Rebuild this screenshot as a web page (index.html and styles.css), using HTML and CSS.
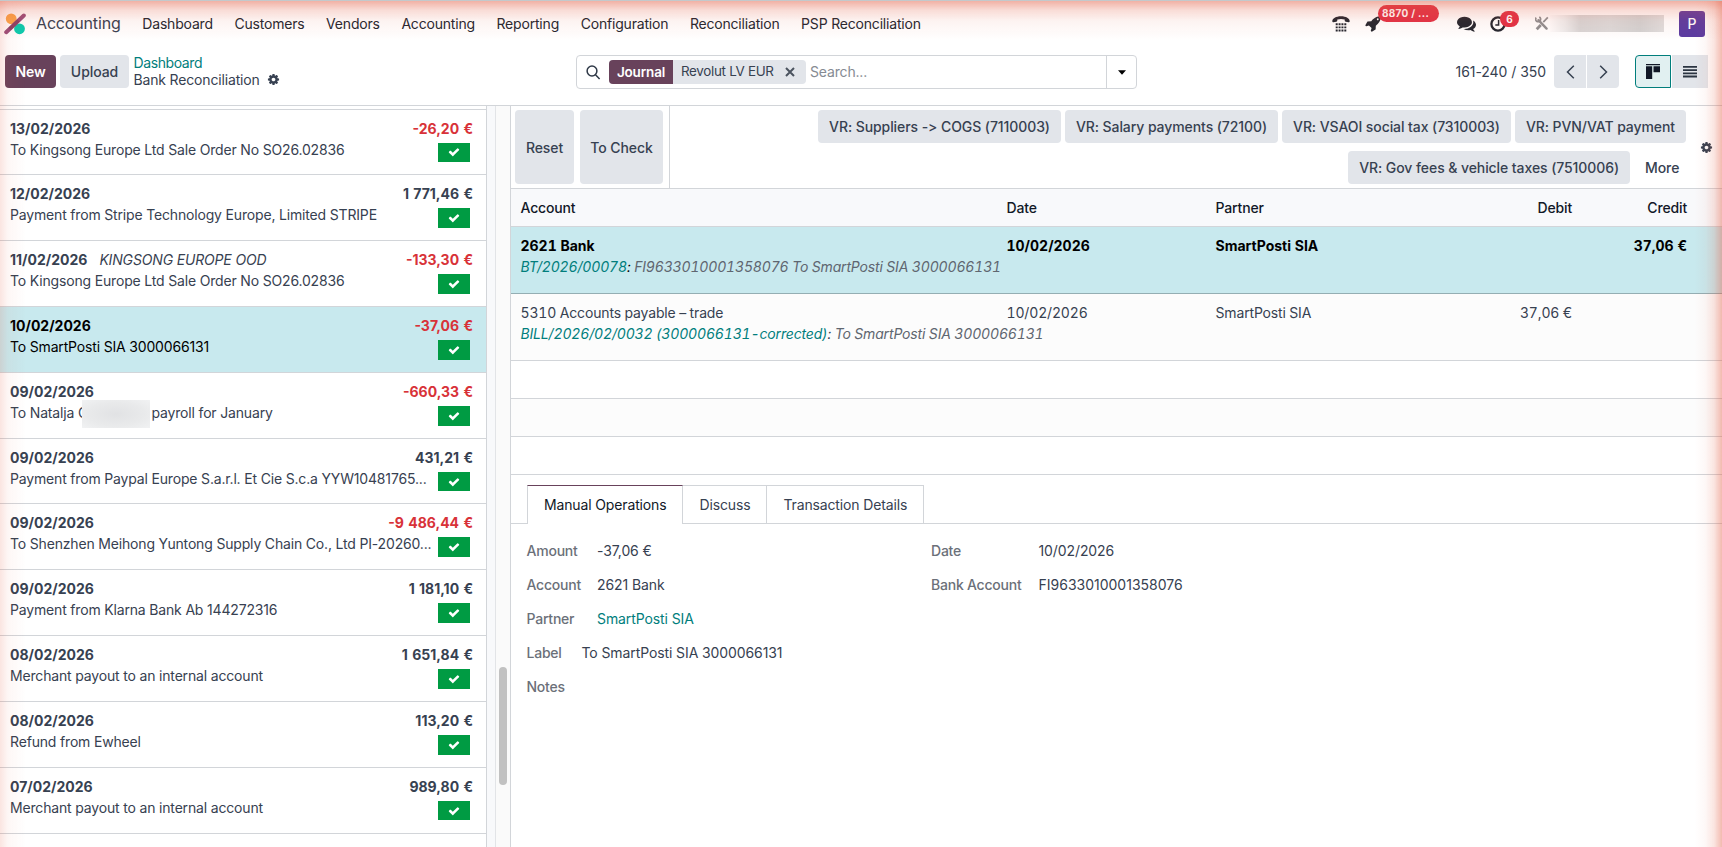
FILE: index.html
```html
<!DOCTYPE html>
<html lang="en">
  <head>
    <meta charset="UTF-8" />
    <meta name="viewport" content="width=device-width, initial-scale=1.0" />
    <title>Bank Reconciliation</title>
    <link rel="stylesheet" href="styles.css">
  </head>
  <body>
    <svg class="sprite" width="0" height="0">
      <symbol id="cog" viewBox="0 0 1792 1792"><path d="M1152 896q0-106-75-181t-181-75-181 75-75 181 75 181 181 75 181-75 75-181zm512-109v222q0 12-8 23t-20 13l-185 28q-19 54-39 91 35 50 107 138 10 12 10 25t-9 23q-27 37-99 108t-94 71q-12 0-26-9l-138-108q-44 23-91 38-16 136-29 186-7 28-36 28h-222q-14 0-24.5-8.5t-11.5-21.5l-28-184q-49-16-90-37l-141 107q-10 9-25 9-14 0-25-11-126-114-165-168-7-10-7-23 0-12 8-23 15-21 51-66.5t54-70.5q-27-50-41-99l-183-27q-13-2-21-12.5t-8-23.5v-222q0-12 8-23t19-13l186-28q14-46 39-92-40-57-107-138-10-12-10-24 0-10 9-23 26-36 98.5-107.5t94.5-71.5q13 0 26 10l138 107q44-23 91-38 16-136 29-186 7-28 36-28h222q14 0 24.5 8.5t11.5 21.5l28 184q49 16 90 37l142-107q9-9 24-9 13 0 25 10 129 119 165 170 7 8 7 22 0 12-8 23-15 21-51 66.5t-54 70.5q26 50 41 98l183 28q13 2 21 12.5t8 23.5z"/></symbol>
      <symbol id="check" viewBox="0 0 1792 1792"><path d="M1671 566q0 40-28 68l-724 724-136 136q-28 28-68 28t-68-28l-136-136-362-362q-28-28-28-68t28-68l136-136q28-28 68-28t68 28l294 295 656-657q28-28 68-28t68 28l136 136q28 28 28 68z"/></symbol>
    </svg>

    <header class="navbar">
      <svg class="logo" width="22" height="22" viewBox="0 0 22 22">
        <circle cx="7.2" cy="5.8" r="5.4" fill="#fba54a"/>
        <circle cx="15.5" cy="15.8" r="5.4" fill="#06cdb0"/>
        <path d="M2.2 19.2L19.8 2.5" stroke="#984c7b" stroke-width="4" stroke-linecap="round"/>
        <path d="M5.6 16L14.4 7.6" stroke="#7a3550" stroke-width="3.4" opacity=".5"/>
      </svg>
      <span class="app-name">Accounting</span>
      <nav class="menu">
        <a>Dashboard</a>
        <a>Customers</a>
        <a>Vendors</a>
        <a>Accounting</a>
        <a>Reporting</a>
        <a>Configuration</a>
        <a>Reconciliation</a>
        <a>PSP Reconciliation</a>
      </nav>
      <div class="systray">
        <svg class="phone" width="18" height="18" viewBox="0 0 18 18">
          <path d="M.3 6.2C.2 3.600 4 1.300 9 1.300s8.800 2.300 8.700 4.900c0 .8-.4 1.100-1.100 1l-2.900-.5c-.7-.1-1-.5-1-1.100V4.600c-2.300-.7-5.100-.7-7.400 0v1c0 .6-.3 1-1 1.100l-2.900.5c-.7.1-1.100-.2-1.100-1z"/>
          <path d="M3.700 9.300h10.600M3.700 12.400h10.600M3.700 15.500h10.600" stroke="#22262f" stroke-width="1.900" stroke-dasharray="2 .87"/>
        </svg>
        <div class="rocket">
          <svg width="17" height="17" viewBox="0 0 1792 1792"><path d="M1440 448q0-40-28-68t-68-28-68 28-28 68 28 68 68 28 68-28 28-68zm224-288q0 249-75.500 430.500t-253.500 360.500q-81 80-195 176l-20 379q-2 16-16 26l-384 224q-7 4-16 4-12 0-23-9l-64-64q-13-14-8-32l85-276-281-281-276 85q-3 1-9 1-14 0-23-9l-64-64q-17-19-5-39l224-384q10-14 26-16l379-20q96-114 176-195 188-187 358-258t431-71q14 0 24 9.500t10 22.500z"/></svg>
          <span class="badge badge-wide">8870 / ...</span>
        </div>
        <svg class="comments" width="19" height="19" viewBox="0 0 1792 1792"><path d="M1408 768q0 139-94 257t-256.500 186.500-353.500 68.500q-86 0-176-16-124 88-278 128-36 9-86 16h-3q-11 0-20.500-8t-11.500-21q-1-3-1-6.500t.5-6.500 2-6l2.500-5 3.500-5.500 4-5 4.500-5 4-4.500q5-6 23-25t26-29.500 22.500-29 25-38.500 20.500-44q-124-72-195-177t-71-224q0-139 94-257t256.500-186.500 353.500-68.500 353.500 68.500 256.500 186.500 94 257zm384 256q0 120-71 224.500t-195 176.500q10 24 20.500 44t25 38.500 22.500 29 26 29.500 23 25q1 1 4 4.500t4.500 5 4 5 3.500 5.500l2.500 5 2 6 .5 6.500-1 6.500q-3 14-13 22t-22 7q-50-7-86-16-154-40-278-128-90 16-176 16-271 0-472-132 58 4 88 4 161 0 309-45t264-129q125-92 192-212t67-254q0-77-23-152 129 71 204 178t75 230z"/></svg>
        <div class="clock">
          <svg width="16" height="16" viewBox="0 0 16 16" fill="none" stroke="#22262f" stroke-width="2.300"><circle cx="8" cy="8" r="6.600"/><path d="M8.600 4v5H5.300" stroke-width="1.500"/></svg>
          <span class="badge">6</span>
        </div>
        <svg class="tools" width="14" height="15" viewBox="0 0 14 15" stroke="#8f8f91" fill="none">
          <path d="M3.500 4.200L11.600 12.600" stroke-width="2.400" stroke-linecap="round"/>
          <path d="M1.200 1.600A2.500 2.500 0 1 0 4.300 1" stroke-width="1.700"/>
          <path d="M12.800 1.400L8.300 6.200" stroke-width="1.700"/>
          <path d="M5.800 9L1.700 13.300" stroke-width="2.800"/>
        </svg>
        <span class="masked-name"></span>
        <span class="avatar">P</span>
      </div>
    </header>

    <div class="control-panel">
      <div class="cp-left">
        <button class="btn btn-primary">New</button>
        <button class="btn">Upload</button>
        <div class="breadcrumb">
          <a class="link">Dashboard</a>
          <span>Bank Reconciliation <svg width="13" height="13"><use href="#cog"/></svg></span>
        </div>
      </div>
      <div class="search">
        <svg class="search-icon" width="15" height="15" viewBox="0 0 15 15" fill="none" stroke="#2f3947" stroke-width="1.500"><circle cx="6" cy="6" r="4.900"/><path d="M9.500 9.700L13.600 14"/></svg>
        <div class="facet">
          <span class="facet-label">Journal</span>
          <span class="facet-value">Revolut LV EUR</span>
          <svg width="10" height="10" viewBox="0 0 10 10" stroke="#4b535f" stroke-width="2"><path d="M1 1l8 8M9 1l-8 8"/></svg>
        </div>
        <span class="placeholder">Search...</span>
        <span class="search-toggle"><svg width="8" height="5" viewBox="0 0 8 5"><path d="M0 .2h8L4 4.800z"/></svg></span>
      </div>
      <div class="cp-right">
        <span class="pager">161-240 / 350</span>
        <div class="btn-group pager-buttons">
          <button class="btn"><svg width="9" height="14" viewBox="0 0 9 14"><path d="M7.800 .7L1.500 7l6.300 6.300"/></svg></button>
          <button class="btn"><svg width="9" height="14" viewBox="0 0 9 14"><path d="M1.200 .7L7.500 7l-6.300 6.300"/></svg></button>
        </div>
        <div class="btn-group view-buttons">
          <button class="btn active"><svg width="14" height="15" viewBox="0 0 14 15"><path d="M0 0h14v1.200H0zM0 2.200h6.200V15H0zM7.500 2.200H14v6H7.500z"/></svg></button>
          <button class="btn"><svg width="14" height="12" viewBox="0 0 14 12"><path d="M0 0h14v1.800H0zM0 3.200h14V5H0zM0 6.400h14v1.800H0zM0 9.600h14v1.800H0z"/></svg></button>
        </div>
      </div>
    </div>

    <main class="content">
      <section class="statements">
        <div class="line">
          <div class="line-head"><b>13/02/2026</b><b class="negative">-26,20 €</b></div>
          <div class="line-body"><span>To Kingsong Europe Ltd Sale Order No SO26.02836</span><i class="matched"><svg width="12" height="12"><use href="#check"/></svg></i></div>
        </div>
        <div class="line">
          <div class="line-head"><b>12/02/2026</b><b>1&nbsp;771,46&nbsp;€</b></div>
          <div class="line-body"><span>Payment from Stripe Technology Europe, Limited STRIPE</span><i class="matched"><svg width="12" height="12"><use href="#check"/></svg></i></div>
        </div>
        <div class="line">
          <div class="line-head"><b>11/02/2026</b><em>KINGSONG EUROPE OOD</em><b class="negative">-133,30 €</b></div>
          <div class="line-body"><span>To Kingsong Europe Ltd Sale Order No SO26.02836</span><i class="matched"><svg width="12" height="12"><use href="#check"/></svg></i></div>
        </div>
        <div class="line selected">
          <div class="line-head"><b>10/02/2026</b><b class="negative">-37,06 €</b></div>
          <div class="line-body"><span>To SmartPosti SIA 3000066131</span><i class="matched"><svg width="12" height="12"><use href="#check"/></svg></i></div>
        </div>
        <div class="line">
          <div class="line-head"><b>09/02/2026</b><b class="negative">-660,33 €</b></div>
          <div class="line-body"><span class="has-mask"><span class="masked-part">To Natalja C</span><span class="mask"></span>payroll for January</span><i class="matched"><svg width="12" height="12"><use href="#check"/></svg></i></div>
        </div>
        <div class="line">
          <div class="line-head"><b>09/02/2026</b><b>431,21 €</b></div>
          <div class="line-body"><span>Payment from Paypal Europe S.a.r.l. Et Cie S.c.a YYW10481765...</span><i class="matched"><svg width="12" height="12"><use href="#check"/></svg></i></div>
        </div>
        <div class="line">
          <div class="line-head"><b>09/02/2026</b><b class="negative">-9&nbsp;486,44&nbsp;€</b></div>
          <div class="line-body"><span>To Shenzhen Meihong Yuntong Supply Chain Co., Ltd PI-20260...</span><i class="matched"><svg width="12" height="12"><use href="#check"/></svg></i></div>
        </div>
        <div class="line">
          <div class="line-head"><b>09/02/2026</b><b>1&nbsp;181,10&nbsp;€</b></div>
          <div class="line-body"><span>Payment from Klarna Bank Ab 144272316</span><i class="matched"><svg width="12" height="12"><use href="#check"/></svg></i></div>
        </div>
        <div class="line">
          <div class="line-head"><b>08/02/2026</b><b>1&nbsp;651,84&nbsp;€</b></div>
          <div class="line-body"><span>Merchant payout to an internal account</span><i class="matched"><svg width="12" height="12"><use href="#check"/></svg></i></div>
        </div>
        <div class="line">
          <div class="line-head"><b>08/02/2026</b><b>113,20 €</b></div>
          <div class="line-body"><span>Refund from Ewheel</span><i class="matched"><svg width="12" height="12"><use href="#check"/></svg></i></div>
        </div>
        <div class="line">
          <div class="line-head"><b>07/02/2026</b><b>989,80 €</b></div>
          <div class="line-body"><span>Merchant payout to an internal account</span><i class="matched"><svg width="12" height="12"><use href="#check"/></svg></i></div>
        </div>
        <div class="line"></div>
      </section>
      <div class="gutter"></div>
      <div class="scrollbar"><div class="thumb"></div></div>

      <section class="detail">
        <div class="actions">
          <div class="actions-left">
            <button class="btn reset">Reset</button>
            <button class="btn to-check">To Check</button>
          </div>
          <div class="models">
            <button class="btn">VR: Suppliers -&gt; COGS (7110003)</button>
            <button class="btn">VR: Salary payments (72100)</button>
            <button class="btn">VR: VSAOI social tax (7310003)</button>
            <button class="btn">VR: PVN/VAT payment</button>
            <button class="btn">VR: Gov fees &amp; vehicle taxes (7510006)</button>
            <button class="btn btn-more">More</button>
          </div>
          <div class="actions-cog"><svg width="13" height="13"><use href="#cog"/></svg></div>
        </div>

        <table class="entries">
          <colgroup>
            <col class="col-account"><col class="col-date"><col class="col-partner"><col class="col-debit"><col class="col-credit"><col>
          </colgroup>
          <thead>
            <tr><th>Account</th><th>Date</th><th>Partner</th><th class="num">Debit</th><th class="num">Credit</th><th></th></tr>
          </thead>
          <tbody>
            <tr class="entry current">
              <td>
                <b>2621 Bank</b>
                <div class="ref"><a class="link">BT/2026/00078</a>: <span>FI9633010001358076 To SmartPosti SIA 3000066131</span></div>
              </td>
              <td><b>10/02/2026</b></td>
              <td><b>SmartPosti SIA</b></td>
              <td></td>
              <td class="num"><b>37,06 €</b></td>
              <td></td>
            </tr>
            <tr class="entry striped">
              <td>
                5310 Accounts payable – trade
                <div class="ref"><a class="link">BILL/2026/02/0032 (3000066131-corrected)</a>: <span>To SmartPosti SIA 3000066131</span></div>
              </td>
              <td>10/02/2026</td>
              <td>SmartPosti SIA</td>
              <td class="num">37,06 €</td>
              <td></td>
              <td></td>
            </tr>
            <tr class="empty"><td colspan="6"></td></tr>
            <tr class="empty striped"><td colspan="6"></td></tr>
            <tr class="empty"><td colspan="6"></td></tr>
          </tbody>
        </table>

        <div class="tabs">
          <span class="tab active">Manual Operations</span>
          <span class="tab">Discuss</span>
          <span class="tab">Transaction Details</span>
        </div>

        <div class="form">
          <div class="form-col">
            <div class="field"><label>Amount</label><span>-37,06 €</span></div>
            <div class="field"><label>Account</label><span>2621 Bank</span></div>
            <div class="field"><label>Partner</label><a class="link">SmartPosti SIA</a></div>
            <div class="field field-narrow"><label>Label</label><span>To SmartPosti SIA 3000066131</span></div>
            <div class="field"><label>Notes</label></div>
          </div>
          <div class="form-col form-col-wide">
            <div class="field"><label>Date</label><span>10/02/2026</span></div>
            <div class="field"><label>Bank Account</label><span class="iban">FI9633010001358076</span></div>
          </div>
        </div>
      </section>
    </main>
    <div class="glow"></div>
  </body>
</html>
```
FILE: styles.css
```css
* {
  box-sizing: border-box;
}
body {
  margin: 0;
  height: 847px;
  overflow: hidden;
  display: flex;
  flex-direction: column;
  background-color: #ffffff;
  color: #374151;
  font-family: Inter, "Liberation Sans", sans-serif;
  font-size: 14px;
  letter-spacing: -0.16px;
  line-height: 21px;
}
svg {
  display: block;
  flex: none;
}
.sprite {
  position: absolute;
}
.link {
  color: #017e7c;
}
b {
  font-weight: 700;
  letter-spacing: 0;
}

/* navbar */
.navbar {
  height: 48px;
  flex: none;
  display: flex;
  align-items: center;
  padding: 0 17px 2px 4px;
  border-top: 1px solid #c3c9cc;
  color: #22262f;
}
.app-name {
  margin: 0 11.500px 0 10px;
  width: 84px;
  font-size: 16px;
  color: #374151;
  white-space: nowrap;
}
.menu {
  display: flex;
}
.menu a {
  padding: 0 10.800px;
  letter-spacing: -0.19px;
  white-space: nowrap;
}
.systray {
  margin-left: auto;
  display: flex;
  align-items: center;
  fill: #22262f;
}
.rocket,
.clock {
  position: relative;
}
.rocket {
  margin: 0 75px 0 15px;
}
.clock {
  margin-left: 14px;
}
.badge {
  position: absolute;
  left: 10px;
  top: -5px;
  width: 19px;
  height: 16px;
  border-radius: 8px;
  background-color: #e23145;
  color: #ffffff;
  font-size: 10px;
  font-weight: 700;
  line-height: 16px;
  text-align: center;
}
.badge-wide {
  left: 13px;
  top: -10px;
  width: 61px;
  height: 17px;
  padding-right: 6px;
  border-radius: 9px;
  letter-spacing: 0.3px;
}
.tools {
  margin-left: 29px;
}
.masked-name {
  margin: 0 15px 0 1px;
  width: 114px;
  height: 17px;
  background: linear-gradient(90deg, #fefcfc 0, #eeeded 15px, #d8d6d6 30px, #dcdbdb 60px, #d3d3d3 90px, #e0dfdf 114px);
}
.avatar {
  width: 26px;
  height: 26px;
  border-radius: 3px;
  background-color: #5a3ba2;
  color: #ffffff;
  font-size: 14px;
  font-weight: 500;
  line-height: 26px;
  text-align: center;
}

/* control panel */
.control-panel {
  height: 58px;
  flex: none;
  display: grid;
  grid-template-columns: 571px 561px 1fr;
  padding: 7px 14px 0 5px;
  border-bottom: 1px solid #d2d5d9;
}
.btn {
  height: 33px;
  padding: 0 10px;
  border: 0;
  border-radius: 4px;
  background-color: #e2e5ea;
  color: #374151;
  font: inherit;
  font-weight: 500;
  letter-spacing: -0.08px;
  white-space: nowrap;
}
.btn-primary {
  background-color: #68425b;
  color: #ffffff;
  font-weight: 600;
}
.cp-left {
  display: flex;
  gap: 4px;
}
.cp-left .btn {
  width: 69px;
  padding: 0;
}
.cp-left .btn-primary {
  width: 51px;
}
.breadcrumb {
  display: flex;
  flex-direction: column;
  margin-left: 0.500px;
  line-height: 16.500px;
}
.breadcrumb .link {
  letter-spacing: -0.4px;
}
.breadcrumb span {
  display: flex;
  align-items: center;
  gap: 7px;
  fill: #374151;
}
.search {
  height: 34px;
  display: flex;
  align-items: center;
  border: 1px solid #d2d5d9;
  border-radius: 4px;
  padding-left: 9px;
}
.facet {
  display: flex;
  align-items: center;
  margin: 0 4px 0 8px;
  width: 197px;
  height: 24px;
  border-radius: 4px;
  background-color: #e2e5ea;
  overflow: hidden;
}
.facet-label {
  width: 64px;
  line-height: 24px;
  background-color: #68425b;
  color: #ffffff;
  font-size: 13.500px;
  font-weight: 600;
  text-align: center;
}
.facet-value {
  width: 112px;
  padding: 0 0 1px 8px;
  font-size: 13.400px;
  letter-spacing: -0.3px;
}
.placeholder {
  padding-bottom: 1px;
  color: #868b93;
}
.search-toggle {
  width: 30px;
  height: 32px;
  margin-left: auto;
  display: flex;
  align-items: center;
  justify-content: center;
  border-left: 1px solid #d2d5d9;
}
.cp-right {
  display: flex;
  justify-content: flex-end;
}
.pager {
  letter-spacing: -0.05px;
  line-height: 33px;
}
.btn-group {
  display: flex;
  gap: 1px;
}
.btn-group .btn {
  display: flex;
  align-items: center;
  justify-content: center;
  padding: 0;
  fill: #2b3441;
}
.btn-group .btn:first-child {
  border-radius: 4px 0 0 4px;
}
.btn-group .btn:last-child {
  border-radius: 0 4px 4px 0;
}
.pager-buttons {
  margin: 0 16px 0 8px;
}
.pager-buttons .btn {
  width: 32px;
}
.pager-buttons svg {
  fill: none;
  stroke: #374151;
  stroke-width: 1.500;
}
.view-buttons .btn {
  width: 36px;
}
.view-buttons .btn:last-child {
  border-radius: 0;
}
.view-buttons .btn.active {
  border: 1px solid #017e7c;
  background-color: #e1f0f1;
  fill: #111827;
}

/* statement lines */
.content {
  flex: 1;
  min-height: 0;
  display: flex;
}
.statements {
  width: 487px;
  padding-top: 2.600px;
  border-right: 1px solid #d2d5d9;
  overflow: hidden;
}
.line {
  height: 65.820px;
  padding: 8px 13px 0 10px;
  border-top: 1px solid #d2d5d9;
}
.line.selected {
  background-color: #c8e9ee;
  color: #000000;
}
.line-head {
  display: flex;
}
.line-head b:last-child {
  margin-left: auto;
  word-spacing: 1px;
}
.line-head em {
  margin-left: 12px;
}
.negative {
  color: #d83238;
}
.line-body {
  display: flex;
  justify-content: space-between;
  letter-spacing: -0.17px;
  white-space: nowrap;
}
.matched {
  display: flex;
  flex: none;
  align-items: center;
  justify-content: center;
  width: 32px;
  height: 19.700px;
  margin: 4px 3px 0 0;
  background-color: #009b43;
  fill: #ffffff;
}
.has-mask {
  display: flex;
}
.masked-part {
  width: 71.500px;
}
.mask {
  width: 68px;
  height: 28px;
  margin: -2px 2px -5px 0;
  background: radial-gradient(#e1e2e4, #e9eaeb 60%, #f1f2f3);
}
.gutter {
  width: 9px;
  background-color: #f8f9fb;
  border-right: 1px solid #e2e4e7;
}
.scrollbar {
  width: 15px;
  padding: 561px 3px 0;
  background-color: #fafafa;
  border-right: 1px solid #d2d5d9;
}
.thumb {
  width: 8px;
  height: 118px;
  border-radius: 4px;
  background-color: #c1c1c1;
}

/* reconciliation detail */
.detail {
  flex: 1;
  min-width: 0;
}
.actions {
  height: 83px;
  display: flex;
  border-bottom: 1px solid #d2d5d9;
}
.actions-left {
  width: 159px;
  display: flex;
  gap: 6px;
  padding: 4px 6px 4px 4px;
  border-right: 1px solid #d2d5d9;
}
.actions-left .btn {
  height: 74px;
  padding: 0;
}
.reset {
  width: 59px;
}
.to-check {
  width: 83px;
}
.models {
  flex: 1;
  display: flex;
  flex-wrap: wrap;
  justify-content: flex-end;
  align-content: flex-start;
  gap: 8px 4px;
  padding: 4px 0 0 100px;
  font-feature-settings: "calt" 0;
}
.models .btn {
  padding: 0 11px;
}
.models .btn-more {
  background-color: transparent;
  width: 52px;
}
.actions-cog {
  width: 36px;
  display: flex;
  align-items: center;
  padding-left: 14px;
  fill: #374151;
}
.entries {
  width: 100%;
  table-layout: fixed;
  border-collapse: separate;
  border-spacing: 0;
  font-variant-numeric: tabular-nums;
}
.col-account {
  width: 486px;
}
.col-date {
  width: 209px;
}
.col-partner {
  width: 230px;
}
.col-debit {
  width: 146px;
}
.col-credit {
  width: 115px;
}
.entries th {
  height: 38px;
  padding: 0 10px 0 9.500px;
  border-bottom: 1px solid #d2d5d9;
  background-color: #f8f9fb;
  color: #111827;
  font-weight: 500;
  text-align: left;
}
.entries td {
  padding: 8px 10px 0 9.500px;
  border-bottom: 1px solid #d2d5d9;
  vertical-align: top;
  white-space: nowrap;
}
.entries .num {
  text-align: right;
}
.entry td {
  height: 67px;
}
.entry.current td {
  background-color: #c8e9ee;
  border-bottom-color: #94aeb3;
  color: #000000;
}
.striped td {
  background-color: #fcfcfc;
}
.empty td {
  height: 38px;
}
.ref {
  font-style: italic;
}
.ref span {
  color: #5f6670;
}
.tabs {
  display: flex;
  margin-top: 10px;
  padding-left: 16px;
  height: 39px;
  border-bottom: 1px solid #d2d5d9;
}
.tab {
  height: 38px;
  padding: 0 16px;
  border: 1px solid #d2d5d9;
  border-width: 1px 1px 0 0;
  letter-spacing: -0.14px;
  line-height: 38px;
}
.tab.active {
  height: 39px;
  border-left-width: 1px;
  border-top-color: #68425b;
  background-color: #ffffff;
  color: #111827;
}
.form {
  display: flex;
  padding: 16px 15.500px;
}
.form-col {
  width: 404.500px;
}
.field {
  display: flex;
  height: 34px;
  letter-spacing: -0.1px;
}
.field label {
  width: 70.500px;
  color: #6b7079;
  font-weight: 500;
  letter-spacing: -0.22px;
}
.field-narrow label {
  width: 55px;
}
.form-col-wide label {
  width: 107.500px;
}
.iban {
  letter-spacing: 0;
}

/* recording highlight round the window edges */
.glow {
  position: fixed;
  inset: 1px 0 0 0;
  pointer-events: none;
  background:
    linear-gradient(180deg, rgba(226, 92, 66, 0.48), rgba(226, 92, 66, 0.22) 9px, rgba(226, 92, 66, 0.07) 20px, transparent 40px),
    linear-gradient(90deg, rgba(226, 92, 66, 0.16), rgba(226, 92, 66, 0.05) 8px, transparent 26px),
    linear-gradient(270deg, rgba(226, 92, 66, 0.42), rgba(226, 92, 66, 0.16) 8px, rgba(226, 92, 66, 0.04) 17px, transparent 28px);
}
```
